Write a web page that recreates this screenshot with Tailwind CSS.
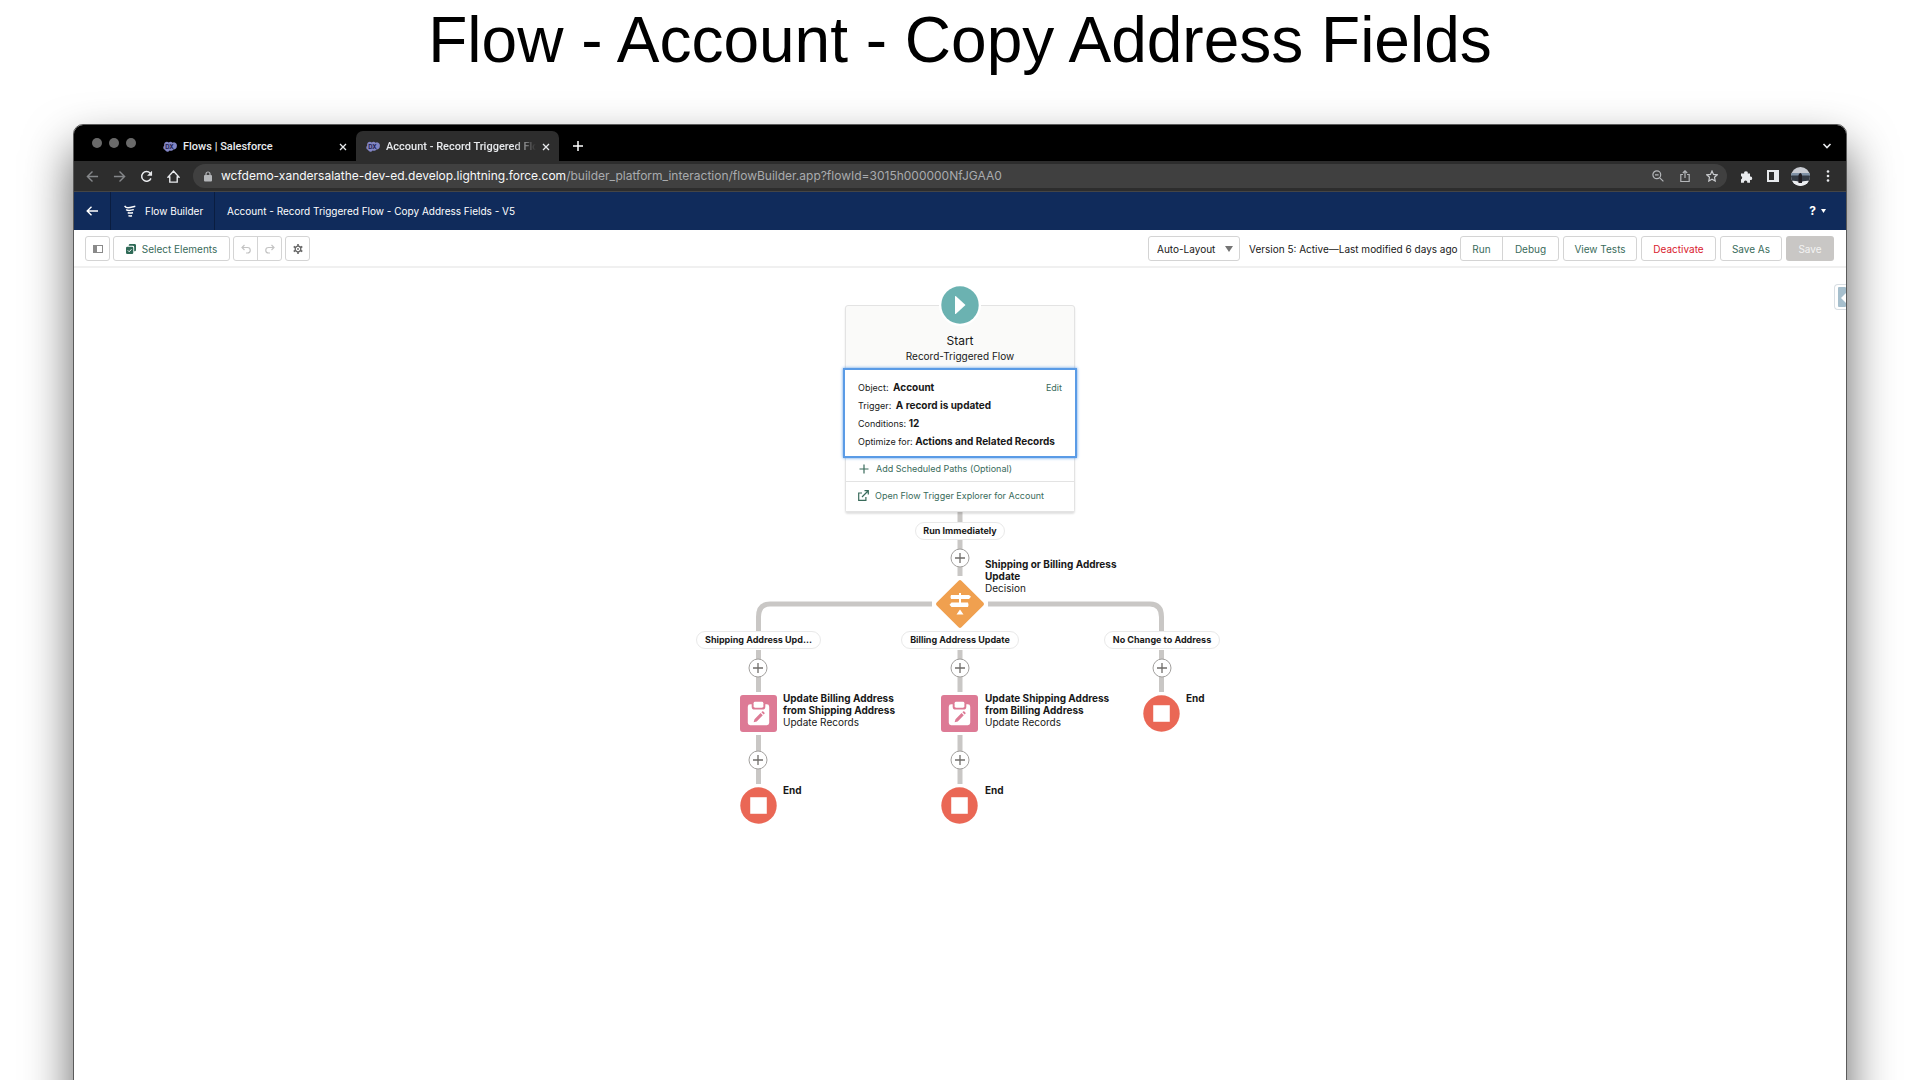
<!DOCTYPE html>
<html lang="en">
<head>
<meta charset="utf-8">
<title>Flow - Account - Copy Address Fields</title>
<script src="https://cdn.jsdelivr.net/npm/@tailwindcss/browser@4"></script>
</head>
<body class="bg-white">
<svg class="hidden">
  <symbol id="dx" viewBox="0 0 16 14"><path fill="#8285c4" d="M6.500 1.800A3.200 3.200 0 0 1 11 2a3.500 3.500 0 0 1 5 3.700c0 2.600-1.700 4.300-4.200 4.100-.8 1.700-2.900 2.200-4.300 1.200-1.400 2.300-4.700 1.700-5.400-.7C-.2 9.800-.4 6.500 1.200 5.500.4 1.800 4.200-.3 6.500 1.800z"/><text x="2.500" y="9" font-family="Inter, sans-serif" font-weight="700" font-size="7" fill="#1c2050">DX</text></symbol>
  <symbol id="close" viewBox="0 0 8 8"><path d="M1 1l6 6M7 1L1 7" stroke="#e8eaed" stroke-width="1.300" fill="none"/></symbol>
  <symbol id="plus" viewBox="0 0 20 20"><circle cx="10" cy="10" r="9" fill="#fff" stroke="#a3a19f"/><path d="M10 5v10M5 10h10" stroke="#706e6b" stroke-width="1.300"/></symbol>
  <symbol id="record" viewBox="0 0 38 38"><rect width="38" height="38" rx="3" fill="#dd7a95"/><path fill="#fff" d="M14 8.500a1.500 1.500 0 0 1 1.500-1.500h7a1.500 1.500 0 0 1 1.500 1.500v3a1.500 1.500 0 0 1-1.500 1.500h-7a1.500 1.500 0 0 1-1.500-1.500z"/><path fill="#fff" d="M12 9.500h-1.500A2.500 2.500 0 0 0 8 12v16.500A2.500 2.500 0 0 0 10.500 31h17a2.500 2.500 0 0 0 2.500-2.500V12a2.500 2.500 0 0 0-2.500-2.500H26V12a3 3 0 0 1-3 3h-8a3 3 0 0 1-3-3z"/><path fill="#dd7a95" d="M14 28l.9-3.200 6.200-6.200 2.300 2.300-6.200 6.200zM22 17.700l1-1c.6-.6 2.900 1.600 2.300 2.300l-1 1z"/></symbol>
  <symbol id="end" viewBox="0 0 38 38"><circle cx="19" cy="19" r="18.700" fill="#ea6755"/><rect x="10.500" y="10.500" width="17" height="17" fill="#fff"/></symbol>
</svg>
<div class="flex min-h-screen flex-col overflow-hidden font-[Inter,sans-serif] text-[10px] leading-3 text-[#181818]">
  <h1 class="mb-[46px] pt-[2px] text-center font-['Liberation_Sans',Arial,sans-serif] text-[64px] leading-[76px] text-black">Flow - Account - Copy Address Fields</h1>

  <main class="mx-[73px] -mb-24 flex flex-1 flex-col overflow-hidden rounded-t-[10px] border border-[#5a5a5a] bg-white shadow-[0_24px_48px_rgba(0,0,0,0.62)]">
    <!-- Browser tabs -->
    <div class="flex h-[36px] items-end bg-black font-[Roboto,sans-serif] text-[11px] leading-4 font-medium text-[#e8eaed]">
      <div class="flex h-full w-[82px] items-center gap-[7px] pl-[18px]">
        <span class="size-[10px] rounded-full bg-[#6a6a6a]"></span><span class="size-[10px] rounded-full bg-[#6a6a6a]"></span><span class="size-[10px] rounded-full bg-[#6a6a6a]"></span>
      </div>
      <div class="flex h-[30px] w-[200px] items-center gap-[6px] pt-px pr-[9px] pl-[7px]">
        <svg class="h-3 w-[14px]"><use href="#dx"/></svg><span class="flex-1">Flows | Salesforce</span>
        <button aria-label="Close tab"><svg class="size-2"><use href="#close"/></svg></button>
      </div>
      <div class="flex h-[30px] w-[203px] items-center gap-[6px] rounded-t-[7px] bg-[#2d2d2d] pt-px pr-[9px] pl-[10px]">
        <svg class="h-3 w-[14px]"><use href="#dx"/></svg><span class="w-0 flex-1 overflow-hidden mask-r-from-85% whitespace-nowrap">Account - Record Triggered Flow</span>
        <button aria-label="Close tab"><svg class="size-2"><use href="#close"/></svg></button>
      </div>
      <button aria-label="New tab" class="ml-[13px] flex h-[30px] items-center"><svg class="size-3" viewBox="0 0 12 12"><path d="M6 1v10M1 6h10" stroke="#fff" stroke-width="1.500"/></svg></button>
      <button aria-label="Search tabs" class="mr-[14px] ml-auto flex h-[30px] items-center"><svg class="size-[10px]" viewBox="0 0 10 10"><path d="M1.500 3L5 6.500 8.500 3" fill="none" stroke="#e8eaed" stroke-width="1.600"/></svg></button>
    </div>
    <!-- Address bar -->
    <div class="flex h-[31px] items-center border-b border-[#454545] bg-[#2d2d2d] pr-[10px] pl-3">
      <div class="flex w-[107px] items-center gap-[14px]">
        <button aria-label="Back"><svg class="size-[13px]" viewBox="0 0 14 14"><path d="M13 7H2M7 1.500L1.500 7 7 12.500" fill="none" stroke="#85878a" stroke-width="1.500"/></svg></button>
        <button aria-label="Forward"><svg class="size-[13px]" viewBox="0 0 14 14"><path d="M1 7h11M7 1.500L12.500 7 7 12.500" fill="none" stroke="#85878a" stroke-width="1.500"/></svg></button>
        <button aria-label="Reload"><svg class="size-[13px]" viewBox="0 0 14 14"><path d="M11.800 9A5.200 5.200 0 1 1 11 3.500" fill="none" stroke="#e8eaed" stroke-width="1.600"/><path d="M13 .8v5.400H7.600z" fill="#e8eaed"/></svg></button>
        <button aria-label="Home"><svg class="size-[13px]" viewBox="0 0 14 14"><path d="M3 13V7.500H1.200L7 1.200l5.800 6.300H11V13z" fill="none" stroke="#e8eaed" stroke-width="1.500"/></svg></button>
      </div>
      <div class="flex h-6 flex-1 items-center rounded-full bg-[#404040] pr-[9px] pl-[11px]">
        <svg class="mr-[9px] h-[11px] w-2" viewBox="0 0 8 11"><rect y="4" width="8" height="6.500" rx="1" fill="#b4b6b9"/><path d="M2 4.500V3a2 2 0 0 1 4 0v1.500" fill="none" stroke="#b4b6b9" stroke-width="1.200"/></svg>
        <p class="flex-1 text-[12px] leading-4 text-[#a9abae]"><span class="text-[#f8f9fa]">wcfdemo-xandersalathe-dev-ed.develop.lightning.force.com</span>/builder_platform_interaction/flowBuilder.app?flowId=3015h000000NfJGAA0</p>
        <div class="flex gap-[15px]">
          <button aria-label="Zoom"><svg class="size-3" viewBox="0 0 12 12"><g fill="none" stroke="#b4b6b9" stroke-width="1.200"><circle cx="4.800" cy="4.800" r="3.900"/><path d="M7.800 7.800l3.600 3.600M3 4.800h3.600"/></g></svg></button>
          <button aria-label="Share"><svg class="size-3" viewBox="0 0 12 12"><path d="M4 4.500H1.800v7h8.400v-7H8M6 8V1M3.800 3L6 .9 8.200 3" fill="none" stroke="#b4b6b9" stroke-width="1.200"/></svg></button>
          <button aria-label="Bookmark"><svg class="size-3" viewBox="0 0 12 12"><path d="M6 1l1.500 3.400 3.700.4-2.700 2.500.7 3.700L6 9.200 2.800 11l.7-3.700L.8 4.800l3.700-.4z" fill="none" stroke="#c8cacd" stroke-width="1.200"/></svg></button>
        </div>
      </div>
      <div class="flex items-center gap-[14px] pl-[13px]">
        <button aria-label="Extensions"><svg class="size-[13px]" viewBox="0 0 13 13"><path d="M1 3.500h3.200a1.800 1.800 0 1 1 3.500 0H10v3a1.800 1.800 0 1 1 0 3.500v2.700H7.200a1.700 1.700 0 1 0-3.200 0H1V9.500a1.800 1.800 0 0 0 0-3.400z" fill="#e8eaed"/></svg></button>
        <button aria-label="Side panel"><svg class="size-3" viewBox="0 0 12 12"><path fill="#e8eaed" fill-rule="evenodd" d="M0 0h12v12H0zM2 2v8h5V2z"/></svg></button>
        <button aria-label="Profile" class="-ml-[2px]"><svg class="size-[19px]" viewBox="0 0 19 19"><clipPath id="face"><circle cx="9.500" cy="9.500" r="9.500"/></clipPath><g clip-path="url(#face)"><rect width="19" height="19" fill="#c9ccd3"/><rect y="6" width="19" height="3" fill="#7f91a6"/><rect y="8.500" width="19" height="6" fill="#343b45"/><path d="M0 14q5-1 9 2 5-3 10-2v5H0z" fill="#eceef0"/><path d="M7.500 16V8Q9.500 4 11 8v8z" fill="#201d22"/></g></svg></button>
        <button aria-label="Menu" class="-ml-1 w-4"><svg class="mx-auto h-3 w-1" viewBox="0 0 4 12"><g fill="#e8eaed"><circle cx="2" cy="1.500" r="1.300"/><circle cx="2" cy="6" r="1.300"/><circle cx="2" cy="10.500" r="1.300"/></g></svg></button>
      </div>
    </div>
    <!-- Flow Builder header -->
    <header class="flex h-[38px] items-center bg-[#102b5b] text-white">
      <a href="#" aria-label="Back" class="flex h-full w-[37px] items-center border-r border-[#0a1d40] pl-3"><svg class="h-[10px] w-3" viewBox="0 0 12 10"><path d="M12 5H1.500M5.500 .8L1.200 5l4.300 4.200" fill="none" stroke="#fff" stroke-width="1.400"/></svg></a>
      <div class="flex h-full w-[104px] items-center border-r border-[#0a1d40] pl-[13px]">
        <svg class="mr-[9px] h-3 w-3" viewBox="0 0 12 12"><g fill="none" stroke="#fff" stroke-width="1.500"><path d="M.6 .8C2.500 4 6 2.500 11.300 1.200"/><path d="M2.200 4.400c1.500 1.800 4 1.200 7.600.2"/><path d="M3.800 7.400c1 1.200 2.500 .9 5.200.3"/><path d="M4.500 10.400c.8.900 1.800 .7 3.500.3"/></g></svg>Flow Builder
      </div>
      <span class="pl-3">Account - Record Triggered Flow - Copy Address Fields - V5</span>
      <button class="mr-[20px] ml-auto flex items-center gap-[5px] text-[12px] font-bold" aria-label="Help">?<svg class="h-1 w-[5px]" viewBox="0 0 5 4"><path d="M0 0h5L2.500 4z" fill="#fff"/></svg></button>
    </header>
    <!-- Toolbar -->
    <div class="flex h-[38px] items-center justify-between border-b-2 border-[#f0f0f0] pt-px pr-3 pl-[11px] text-[#396b5b]">
      <div class="flex items-center gap-[3px]">
        <button aria-label="Toggle toolbox" class="flex h-[25px] w-[25px] items-center justify-center rounded-[3px] border border-[#d4d4d4]"><svg class="h-2 w-[10px]" viewBox="0 0 10 8"><rect x=".5" y=".5" width="9" height="7" fill="none" stroke="#8a8a8a"/><path d="M1 1h3v6H1z" fill="#8a8a8a"/></svg></button>
        <button class="flex h-[25px] w-[117px] items-center justify-center gap-[6px] rounded-[3px] border border-[#d4d4d4]"><svg class="size-[10px]" viewBox="0 0 11 11"><path d="M3 2V1.500A1.500 1.500 0 0 1 4.500 0h5A1.500 1.500 0 0 1 11 1.500v5A1.500 1.500 0 0 1 9.500 8H9V3.500A1.500 1.500 0 0 0 7.500 2z" fill="#2f6a57"/><rect y="3" width="8" height="8" rx="1.300" fill="#2f6a57"/><path d="M2 7l1.500 1.500L6 5.800" fill="none" stroke="#fff" stroke-width="1.100"/></svg>Select Elements</button>
        <div class="flex h-[25px] w-[49px] divide-x divide-[#d4d4d4] rounded-[3px] border border-[#d4d4d4]">
          <button aria-label="Undo" disabled class="flex flex-1 items-center justify-center"><svg class="size-[10px]" viewBox="0 0 10 10"><path d="M1 3.500h5.500a2.600 2.600 0 0 1 0 5.500H5M3.500 1L1 3.500 3.500 6" fill="none" stroke="#c4c4c4" stroke-width="1.200"/></svg></button>
          <button aria-label="Redo" disabled class="flex flex-1 items-center justify-center"><svg class="size-[10px]" viewBox="0 0 10 10"><path d="M9 3.500H3.500a2.600 2.600 0 0 0 0 5.500H5M6.500 1L9 3.500 6.500 6" fill="none" stroke="#c4c4c4" stroke-width="1.200"/></svg></button>
        </div>
        <button aria-label="Settings" class="flex h-[25px] w-[25px] items-center justify-center rounded-[3px] border border-[#d4d4d4]"><svg class="size-[10px]" viewBox="0 0 10 10"><circle cx="5" cy="5" r="2.800" fill="none" stroke="#666" stroke-width="1.300"/><circle cx="5" cy="5" r=".9" fill="#666"/><path d="M5 0v2M5 8v2M.7 2.500l1.700 1M7.600 6.500l1.700 1M.7 7.500l1.700-1M7.600 3.500l1.700-1" stroke="#666" stroke-width="1.600"/></svg></button>
      </div>
      <div class="flex items-center gap-1">
        <div class="relative">
          <select aria-label="Layout" class="h-[25px] w-[92px] appearance-none rounded-[3px] border border-[#d4d4d4] bg-white pl-2 text-[#181818]"><option>Auto-Layout</option><option>Free-Form</option></select>
          <svg class="pointer-events-none absolute top-[10px] right-[7px] h-[6px] w-2" viewBox="0 0 8 6"><path d="M0 0h8L4 6z" fill="#747474"/></svg>
        </div>
        <span class="w-[212px] pl-[5px] whitespace-nowrap text-[#181818]">Version 5: Active—Last modified 6 days ago</span>
        <div class="flex h-[25px] w-[99px] divide-x divide-[#d4d4d4] rounded-[3px] border border-[#d4d4d4]"><button class="w-[42px]">Run</button><button class="flex-1">Debug</button></div>
        <button class="h-[25px] w-[74px] rounded-[3px] border border-[#d4d4d4]">View Tests</button>
        <button class="h-[25px] w-[75px] rounded-[3px] border border-[#d4d4d4] text-[#d9202e]">Deactivate</button>
        <button class="h-[25px] w-[62px] rounded-[3px] border border-[#d4d4d4]">Save As</button>
        <button disabled class="h-[25px] w-[48px] rounded-[3px] bg-[#c9c7c5] text-[#f3f3f3]">Save</button>
      </div>
    </div>
    <!-- Canvas -->
    <section class="relative flex-1">
      <button aria-label="Open side panel" class="absolute top-[16px] right-0 h-[26px] w-[12px] rounded-l-[4px] border border-r-0 border-[#d9dfe4] bg-white py-[2px] pl-[3px]"><svg class="h-5 w-2" viewBox="0 0 8 20"><rect width="8" height="20" rx="1" fill="#a6bfcd"/><path d="M8 6v10L3 11z" fill="#fff"/></svg></button>

      <div class="relative mx-auto h-[600px] w-[560px]">
        <svg class="absolute inset-0 h-[600px] w-[560px]" viewBox="0 0 560 600">
          <g fill="none" stroke="#c9c7c5" stroke-width="5">
            <path d="M280 243V308M280 382V424M280 467V516M78.500 382V424M78.500 467V516M481.500 382V424"/>
            <path d="M252 336H90Q78.500 336 78.500 349V366M308 336H470Q481.500 336 481.500 349V366"/>
          </g>
          <rect x="262.500" y="318.500" width="35" height="35" rx="2" transform="rotate(45 280 336)" fill="#f0a04f"/>
          <g fill="#fff"><path d="M279 325h2v2h8l2 1.700-2 2.300h-18q-1-2 0-4h8zM271.500 334.500H288q1 2.200 0 4.500h-16.500l-2-2.300zM279 331h2v4h-2zM280 341.500l3.500 5h-7z"/></g>
        </svg>

        <div class="absolute top-[37px] left-[165px] w-[230px] rounded-[3px] border border-[#e3e3e3] bg-[#fafaf9] shadow-[0_2px_2px_rgba(0,0,0,0.12)]">
          <div class="h-[62px] pt-[27px] text-center"><h2 class="text-[12px] leading-4">Start</h2><p class="leading-[14px]">Record-Triggered Flow</p></div>
          <div class="relative -mx-[3px] h-[90px] border-2 border-[#5a9be6] bg-white px-[13px] pt-[9px] text-[9px] leading-[17px] shadow-[0_0_3px_#5a9be6]">
            <a href="#" class="float-right text-[#396b5b]">Edit</a>
            <p class="h-[18px]">Object: <b class="ml-[2px] text-[10px] font-bold">Account</b></p>
            <p class="h-[18px]">Trigger: <b class="ml-[2px] text-[10px] font-bold">A record is updated</b></p>
            <p class="h-[18px]">Conditions: <b class="text-[10px] font-bold">12</b></p>
            <p class="h-[18px]">Optimize for: <b class="text-[10px] font-bold">Actions and Related Records</b></p>
          </div>
          <div class="flex h-[24px] items-center gap-[7px] border-b border-[#e3e3e3] bg-white pb-[2px] pl-[13px] text-[9px] text-[#396b5b]"><svg class="size-[10px]" viewBox="0 0 10 10"><path d="M5 .5v9M.5 5h9" stroke="#396b5b" stroke-width="1.200"/></svg><a href="#">Add Scheduled Paths (Optional)</a></div>
          <div class="flex h-[29px] items-center gap-[6px] bg-white pb-[2px] pl-[12px] text-[9px] text-[#396b5b]"><svg class="size-[11px]" viewBox="0 0 11 11"><path d="M4 3H.7v7.300h7.200V7M6.500 .7h3.800v3.800M10 1L4 7" fill="none" stroke="#396b5b" stroke-width="1.200"/></svg><a href="#">Open Flow Trigger Explorer for Account</a></div>
        </div>
        <svg class="absolute top-[16px] left-[259px] size-[42px]" viewBox="0 0 42 42"><circle cx="21" cy="21" r="21" fill="#fff"/><circle cx="21" cy="21" r="18.700" fill="#6bb2b1"/><path d="M16 12.500v17q0 1 1 .2L26.500 21 17 12.300q-1-.8-1 .2z" fill="#fff"/></svg>

        <span class="absolute top-[254px] left-[235px] flex h-[18px] w-[90px] items-center justify-center rounded-full border border-[#e9e9e9] bg-white text-[9px] font-bold">Run Immediately</span>
        <span class="absolute top-[363px] left-[16px] flex h-[18px] w-[125px] items-center justify-center rounded-full border border-[#e9e9e9] bg-white text-[9px] font-bold">Shipping Address Upd...</span>
        <span class="absolute top-[363px] left-[221px] flex h-[18px] w-[118px] items-center justify-center rounded-full border border-[#e9e9e9] bg-white text-[9px] font-bold">Billing Address Update</span>
        <span class="absolute top-[363px] left-[424px] flex h-[18px] w-[116px] items-center justify-center rounded-full border border-[#e9e9e9] bg-white text-[9px] font-bold">No Change to Address</span>

        <button aria-label="Add element" class="absolute top-[280px] left-[270px] size-5"><svg class="size-5"><use href="#plus"/></svg></button>
        <button aria-label="Add element" class="absolute top-[390px] left-[68px] size-5"><svg class="size-5"><use href="#plus"/></svg></button>
        <button aria-label="Add element" class="absolute top-[390px] left-[270px] size-5"><svg class="size-5"><use href="#plus"/></svg></button>
        <button aria-label="Add element" class="absolute top-[390px] left-[472px] size-5"><svg class="size-5"><use href="#plus"/></svg></button>
        <button aria-label="Add element" class="absolute top-[482px] left-[68px] size-5"><svg class="size-5"><use href="#plus"/></svg></button>
        <button aria-label="Add element" class="absolute top-[482px] left-[270px] size-5"><svg class="size-5"><use href="#plus"/></svg></button>

        <svg class="absolute top-[427px] left-[60px] size-[37px]"><use href="#record"/></svg>
        <svg class="absolute top-[427px] left-[261px] size-[37px]"><use href="#record"/></svg>
        <svg class="absolute top-[427px] left-[463px] size-[37px]"><use href="#end"/></svg>
        <svg class="absolute top-[519px] left-[60px] size-[37px]"><use href="#end"/></svg>
        <svg class="absolute top-[519px] left-[261px] size-[37px]"><use href="#end"/></svg>

        <div class="absolute top-[290px] left-[305px] w-[150px]"><b class="font-bold">Shipping or Billing Address<br>Update</b><br>Decision</div>
        <div class="absolute top-[424px] left-[103px] w-[140px]"><b class="font-bold">Update Billing Address<br>from Shipping Address</b><br>Update Records</div>
        <div class="absolute top-[424px] left-[305px] w-[140px]"><b class="font-bold">Update Shipping Address<br>from Billing Address</b><br>Update Records</div>
        <b class="absolute top-[424px] left-[506px] font-bold">End</b>
        <b class="absolute top-[516px] left-[103px] font-bold">End</b>
        <b class="absolute top-[516px] left-[305px] font-bold">End</b>
      </div>
    </section>
  </main>
</div>
</body>
</html>
